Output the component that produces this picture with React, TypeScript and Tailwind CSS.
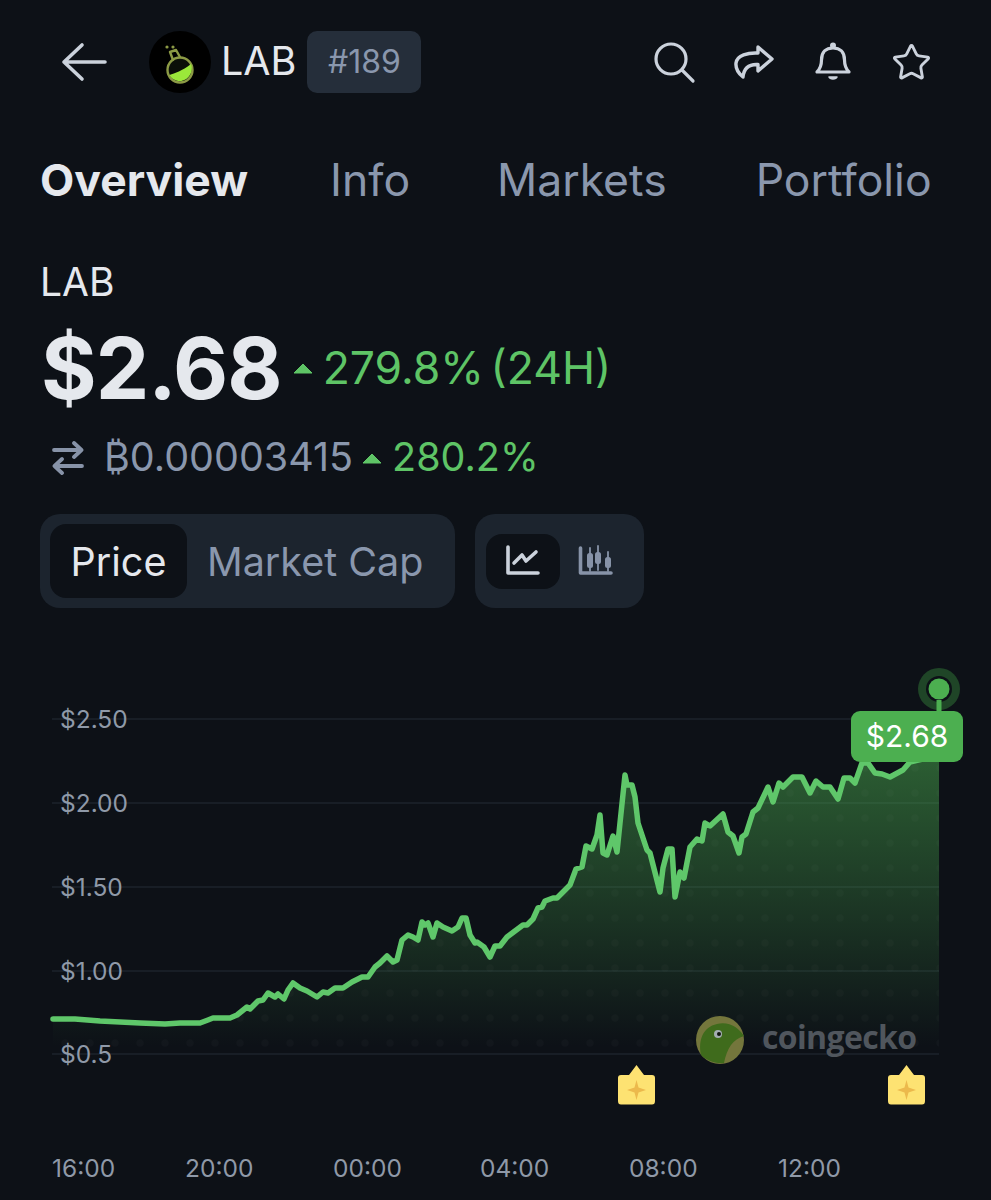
import { Star } from 'lucide-react'

const priceLabels = [
  { y: 719, label: '$2.50' },
  { y: 803, label: '$2.00' },
  { y: 887, label: '$1.50' },
  { y: 971, label: '$1.00' },
  { y: 1054, label: '$0.5' },
]

const timeLabels = [
  { x: 52, label: '16:00' },
  { x: 185, label: '20:00' },
  { x: 333, label: '00:00' },
  { x: 480, label: '04:00' },
  { x: 629, label: '08:00' },
  { x: 778, label: '12:00' },
]

// traced by hand, page coordinates
const line =
  '53,1019 75,1019 100,1021 140,1023 165,1024 180,1023 200,1023 208,1020 213,1018 230,1018 237,1015 247,1007 250,1009 258,1001 263,1000 268,993 275,997 278,994 284,999 288,990 293,983 300,988 307,991 317,997 323,992 328,993 335,988 343,988 352,982 362,977 368,977 375,967 380,963 387,956 393,962 397,960 402,940 408,935 413,937 418,940 422,922 425,925 428,923 433,937 437,923 443,927 452,931 458,927 462,918 466,918 470,935 475,943 477,942 484,947 490,957 495,946 500,946 507,937 523,925 527,925 533,919 538,908 542,907 545,901 553,898 557,898 570,885 576,869 582,867 586,846 592,849 597,835 600,815 603,853 607,855 613,836 617,852 620,823 625,775 627,785 632,785 635,797 638,823 647,850 650,853 660,892 663,868 668,849 672,849 675,897 680,872 684,878 690,847 697,839 702,841 705,823 710,826 723,814 728,832 733,836 739,853 742,837 746,834 753,812 758,808 768,787 773,802 779,783 783,787 793,777 802,777 810,793 816,781 823,787 830,787 838,799 844,778 850,778 855,783 862,763 868,763 875,773 882,774 890,777 903,770 910,762 927,758 939,752'

function FlaskLogo() {
  return (
    <div className="flex h-[62px] w-[62px] shrink-0 items-center justify-center rounded-full bg-black">
      <svg width="62" height="62" viewBox="0 0 62 62">
        <circle cx="31" cy="39" r="12.5" fill="#0b0f08" stroke="#8c9a45" strokeWidth="2.4" />
        <path d="M20.5 44 C26 42 33 40 42 33 C45 41 39 50 31 50 C26 50 22.5 47.5 20.5 44Z" fill="#9be83a" />
        <path d="M24 29 L21 21 M31 26 L27 19 M21 21 L27 19" fill="none" stroke="#8c9a45" strokeWidth="2.4" strokeLinecap="round" />
        <circle cx="18" cy="16" r="1.6" fill="#8c9a45" />
        <circle cx="24" cy="16" r="1.6" fill="#8c9a45" />
      </svg>
    </div>
  )
}

function BackIcon() {
  return (
    <svg width="47" height="40" viewBox="0 0 47 40" fill="none" stroke="#cbd2dc" strokeWidth="3.6" strokeLinecap="round" strokeLinejoin="round">
      <path d="M3 20 H44 M21 3 L3 20 L21 37" />
    </svg>
  )
}

function SearchIcon() {
  return (
    <svg width="44" height="44" viewBox="0 0 44 44" fill="none" stroke="#cbd2dc" strokeWidth="3.2" strokeLinecap="round">
      <circle cx="19" cy="19" r="15" />
      <path d="M30 30 L41 41" />
    </svg>
  )
}

function ShareIcon() {
  return (
    <svg width="42" height="40" viewBox="0 0 42 40" fill="none" stroke="#cbd2dc" strokeWidth="3.4" strokeLinecap="round" strokeLinejoin="round">
      <path d="M25 5 L39 17 L25 29 V22.5 C17 22 11 25 10 35 C5 31 2.5 26 3 21 C4 13 15 10.5 25 11 Z" />
    </svg>
  )
}

function BellIcon() {
  return (
    <svg width="42" height="42" viewBox="0 0 42 42" fill="none" stroke="#cbd2dc" strokeWidth="3.2" strokeLinecap="round" strokeLinejoin="round">
      <circle cx="21" cy="4.5" r="1.4" fill="#cbd2dc" />
      <path d="M5 31 H37 C34 28 32.5 25 32.5 19 C32.5 11 28 7 21 7 C14 7 9.5 11 9.5 19 C9.5 25 8 28 5 31 Z" />
      <path d="M17 36 H25 C24 38.5 18 38.5 17 36 Z" fill="#cbd2dc" strokeWidth="1.5" />
    </svg>
  )
}

function SwapIcon() {
  return (
    <svg width="32" height="34" viewBox="0 0 32 34" fill="none" stroke="#8793a8" strokeWidth="3.8" strokeLinecap="round" strokeLinejoin="round">
      <path d="M2 9 H29 M22 2 L29.5 9 L22 16" />
      <path d="M30 25 H3 M10 18 L2.5 25 L10 32" />
    </svg>
  )
}

function UpTriangle({ className }: { className: string }) {
  return (
    <svg className={className} width="20" height="11" viewBox="0 0 20 11">
      <path d="M10 1 L19 10 H1 Z" fill="#5ec466" stroke="#5ec466" strokeLinejoin="round" />
    </svg>
  )
}

function LineModeIcon() {
  return (
    <svg width="36" height="32" viewBox="0 0 36 32" fill="none" stroke="#cbd2dc" strokeWidth="3.6" strokeLinecap="round" strokeLinejoin="round">
      <path d="M3 2 V28 H33" />
      <path d="M9 18 L17 10 L21 16 L31 7" />
    </svg>
  )
}

function CandleModeIcon() {
  return (
    <svg width="36" height="32" viewBox="0 0 36 32" fill="none" stroke="#8793a8" strokeWidth="3.6" strokeLinecap="round" strokeLinejoin="round">
      <path d="M2.5 3 V28 H33" />
      <path d="M12 3 V26 M20 1 V25 M30 7 V26" strokeWidth="1.8" />
      <rect x="9" y="8" width="6" height="15" rx="2.5" fill="#8793a8" strokeWidth="0" />
      <rect x="17" y="7" width="6" height="12" rx="2.5" fill="#8793a8" strokeWidth="0" />
      <rect x="27" y="12" width="6" height="11" rx="2.5" fill="#8793a8" strokeWidth="0" />
    </svg>
  )
}

function EventBadge({ x }: { x: number }) {
  return (
    <g transform={`translate(${x} 0)`}>
      <path d="M3 1075 H11 L18.5 1065 L26 1075 H34 Q37 1075 37 1078 V1101 Q37 1104.5 34 1104.5 H3 Q0 1104.5 0 1101 V1078 Q0 1075 3 1075 Z" fill="#fde272" />
      <path d="M18.5 1080 L20.5 1087.5 L28 1090 L20.5 1092.5 L18.5 1100 L16.5 1092.5 L9 1090 L16.5 1087.5 Z" fill="#ecb94c" />
    </g>
  )
}

function PriceChart() {
  return (
    <div className="relative h-[540px] w-full">
      <svg className="block" width="991" height="540" viewBox="0 660 991 540">
        <defs>
          <linearGradient id="area" gradientUnits="userSpaceOnUse" x1="0" y1="760" x2="0" y2="1046">
            <stop offset="0" stopColor="#4caf50" stopOpacity="0.48" />
            <stop offset="0.55" stopColor="#4caf50" stopOpacity="0.22" />
            <stop offset="1" stopColor="#4caf50" stopOpacity="0" />
          </linearGradient>
          <pattern id="dots" patternUnits="userSpaceOnUse" x="3" y="1006" width="25" height="25">
            <circle cx="12" cy="12" r="3.5" fill="#ffffff" fillOpacity="0.02" />
          </pattern>
        </defs>

        {priceLabels.map((row) => (
          <line key={row.label} x1="52" x2="939" y1={row.y} y2={row.y} stroke="#1d232d" strokeWidth="1.5" />
        ))}

        <polygon points={`${line} 939,1050 53,1050`} fill="url(#area)" />
        <polygon points={`${line} 939,1050 53,1050`} fill="url(#dots)" />
        <polyline points={line} fill="none" stroke="#5fc76a" strokeWidth="5.5" strokeLinejoin="round" strokeLinecap="round" />

        {priceLabels.map((row) => (
          <text key={row.label} x="60" y={row.y + 9} fill="#8f99a8" fontSize="24.5" fontFamily="Inter, sans-serif">
            {row.label}
          </text>
        ))}
        {timeLabels.map((t) => (
          <text key={t.label} x={t.x} y="1177" fill="#8f99a8" fontSize="24.5" fontFamily="Inter, sans-serif">
            {t.label}
          </text>
        ))}

        <EventBadge x={618} />
        <EventBadge x={888} />

        <circle cx="720" cy="1040" r="24" fill="#74763c" />
        <path d="M701 1055 C698 1040 703 1027 717 1024 C729 1021 739 1028 744 1036 C733 1039 727 1048 724 1063 C715 1064 706 1060 701 1055 Z" fill="#3f6b1c" />
        <circle cx="718" cy="1034" r="4" fill="#a4adb2" />
        <circle cx="719" cy="1034" r="2" fill="#11150f" />
        <text x="762" y="1049" fill="#50565d" fontSize="32" fontWeight="700" fontFamily="'Open Sans', sans-serif" textLength="155">
          coingecko
        </text>

        <circle cx="939" cy="689" r="21" fill="#1f4527" />
        <circle cx="939" cy="689" r="13" fill="#0d1117" />
        <circle cx="939" cy="689" r="10.5" fill="#4caf50" />
        <rect x="936.5" y="700" width="5" height="14" fill="#4caf50" />
      </svg>

      <div className="absolute left-[851px] top-[51px] flex h-[51px] w-[112px] items-center justify-center rounded-[9px] bg-[#4caf50] text-[30px] text-white">
        $2.68
      </div>
    </div>
  )
}

export default function App() {
  return (
    <div className="min-h-screen w-full overflow-hidden bg-[#0d1117] pt-[31px] [font-family:Inter,sans-serif]">
      <header className="flex h-[62px] items-center pl-[61px] pr-[59px]">
        <BackIcon />
        <div className="ml-[41px]">
          <FlaskLogo />
        </div>
        <span className="ml-[10px] text-[39.5px] text-[#e5e8ed]">LAB</span>
        <span className="ml-[11px] flex h-[62px] w-[114px] items-center justify-center rounded-[10px] bg-[#252e3a] text-[32px] text-[#8a97ad]">
          #189
        </span>
        <div className="ml-auto flex items-center gap-[37px]">
          <SearchIcon />
          <ShareIcon />
          <BellIcon />
          <Star size={41} strokeWidth={1.7} color="#cbd2dc" />
        </div>
      </header>

      <nav className="mt-[62px] flex h-[50px] items-center pl-[40px] text-[44.5px] text-[#8a97ad]">
        <span className="font-bold text-[#e5e8ed]">Overview</span>
        <span className="ml-[82px]">Info</span>
        <span className="ml-[87px]">Markets</span>
        <span className="ml-[89px]">Portfolio</span>
      </nav>

      <div className="mt-[57px] flex h-[40px] items-center pl-[40px] text-[39px] text-[#e5e8ed]">LAB</div>

      <div className="mt-[21px] flex h-[90px] items-center pl-[41px]">
        <span className="text-[85px] font-bold leading-none tracking-[-1px] text-[#e5e8ed]">$2.68</span>
        <UpTriangle className="ml-[11px] shrink-0" />
        <span className="ml-[10px] text-[44.5px] text-[#5ec466] [word-spacing:-6px]">279.8% (24H)</span>
      </div>

      <div className="mt-[20px] flex h-[50px] items-center pl-[52px] text-[39.5px]">
        <SwapIcon />
        <span className="ml-[20px] text-[#8a97ad]">₿0.00003415</span>
        <UpTriangle className="ml-[9px] shrink-0" />
        <span className="ml-[10px] text-[#5ec466]">280.2%</span>
      </div>

      <div className="mt-[31px] flex gap-[20px] pl-[40px]">
        <div className="flex h-[94px] w-[415px] items-center rounded-[20px] bg-[#1c242e] pl-[10px] text-[39.5px]">
          <span className="flex h-[74px] w-[137px] items-center justify-center rounded-[16px] bg-[#0d1117] pt-[3px] text-[#e5e8ed]">
            Price
          </span>
          <span className="ml-[20px] pt-[3px] text-[#8a97ad]">Market Cap</span>
        </div>
        <div className="flex h-[94px] w-[169px] items-center rounded-[20px] bg-[#1c242e] pl-[11px]">
          <span className="flex h-[55px] w-[74px] items-center justify-center rounded-[16px] bg-[#0d1117]">
            <LineModeIcon />
          </span>
          <span className="ml-[18px]">
            <CandleModeIcon />
          </span>
        </div>
      </div>

      <div className="mt-[52px]">
        <PriceChart />
      </div>
    </div>
  )
}
